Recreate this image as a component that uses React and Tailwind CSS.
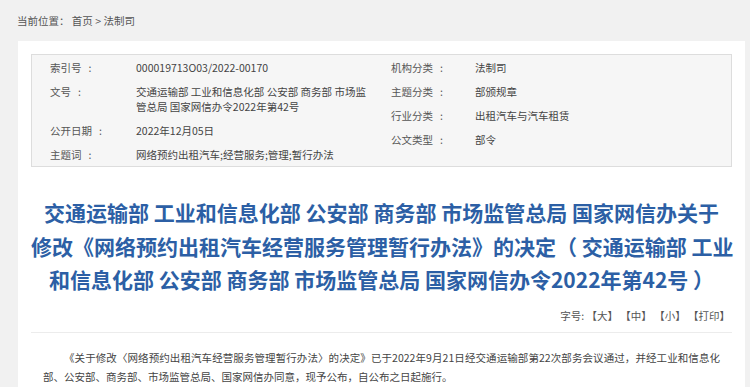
export default function App() {
  const font = { fontFamily: '"Noto Sans CJK SC", "Noto Sans", sans-serif' };
  const left = [
    ["索引号", "000019713O03/2022-00170"],
    ["文号", "交通运输部 工业和信息化部 公安部 商务部 市场监管总局 国家网信办令2022年第42号"],
    ["公开日期", "2022年12月05日"],
    ["主题词", "网络预约出租汽车;经营服务;管理;暂行办法"],
  ];
  const right = [
    ["机构分类", "法制司"],
    ["主题分类", "部颁规章"],
    ["行业分类", "出租汽车与汽车租赁"],
    ["公文类型", "部令"],
  ];
  return (
    <div className="w-[750px] h-[387px] overflow-hidden bg-[#f1f1f1]" style={font}>
      <div className="h-[41px] pl-[17px] flex items-center text-[10.5px] text-[#555]">
        当前位置：&nbsp;首页 &gt; 法制司
      </div>
      <div className="ml-[18px] mr-[5px] bg-white px-[13px] pt-[13px] h-[400px]">
        <div className="border border-[#dddddd] bg-[#f6f6f6] flex pl-[18px] text-[10.5px] text-[#444]">
          <div className="w-[322px]">
            {left.map(([k, v]) => (
              <div key={k} className="flex py-[4.5px] leading-[15px]">
                <div className="w-[86px] shrink-0 text-[#555]">
                  {k}
                  <span className="ml-[7px]">:</span>
                </div>
                <div className="flex-1">{v}</div>
              </div>
            ))}
          </div>
          <div className="ml-[19px] flex-1">
            {right.map(([k, v]) => (
              <div key={k} className="flex py-[4.5px] leading-[15px]">
                <div className="w-[84px] shrink-0 text-[#555]">
                  {k}
                  <span className="ml-[7px]">:</span>
                </div>
                <div className="flex-1">{v}</div>
              </div>
            ))}
          </div>
        </div>
        <h1 className="mt-[29px] text-center text-[21px] font-bold leading-[33.5px] text-[#2c5fa5]">
          <span className="block whitespace-nowrap">交通运输部 工业和信息化部 公安部 商务部 市场监管总局 国家网信办关于</span>
          <span className="block whitespace-nowrap">修改《网络预约出租汽车经营服务管理暂行办法》的决定（ 交通运输部 工业</span>
          <span className="block whitespace-nowrap">和信息化部 公安部 商务部 市场监管总局 国家网信办令2022年第42号 ）</span>
        </h1>
        <div className="flex justify-end items-center h-[36px] pt-[4px] border-b border-[#ececec] text-[10.5px] text-[#555] pr-[2px]">
          字号:&nbsp;【大】&nbsp;【中】&nbsp;【小】&nbsp;【打印】
        </div>
        <p className="mt-[15px] px-[12px] text-[10.5px] leading-[19px] text-[#444] indent-[2em] text-justify">
          《关于修改〈网络预约出租汽车经营服务管理暂行办法〉的决定》已于2022年9月21日经交通运输部第22次部务会议通过，并经工业和信息化部、公安部、商务部、市场监管总局、国家网信办同意，现予公布，自公布之日起施行。
        </p>
      </div>
    </div>
  );
}
